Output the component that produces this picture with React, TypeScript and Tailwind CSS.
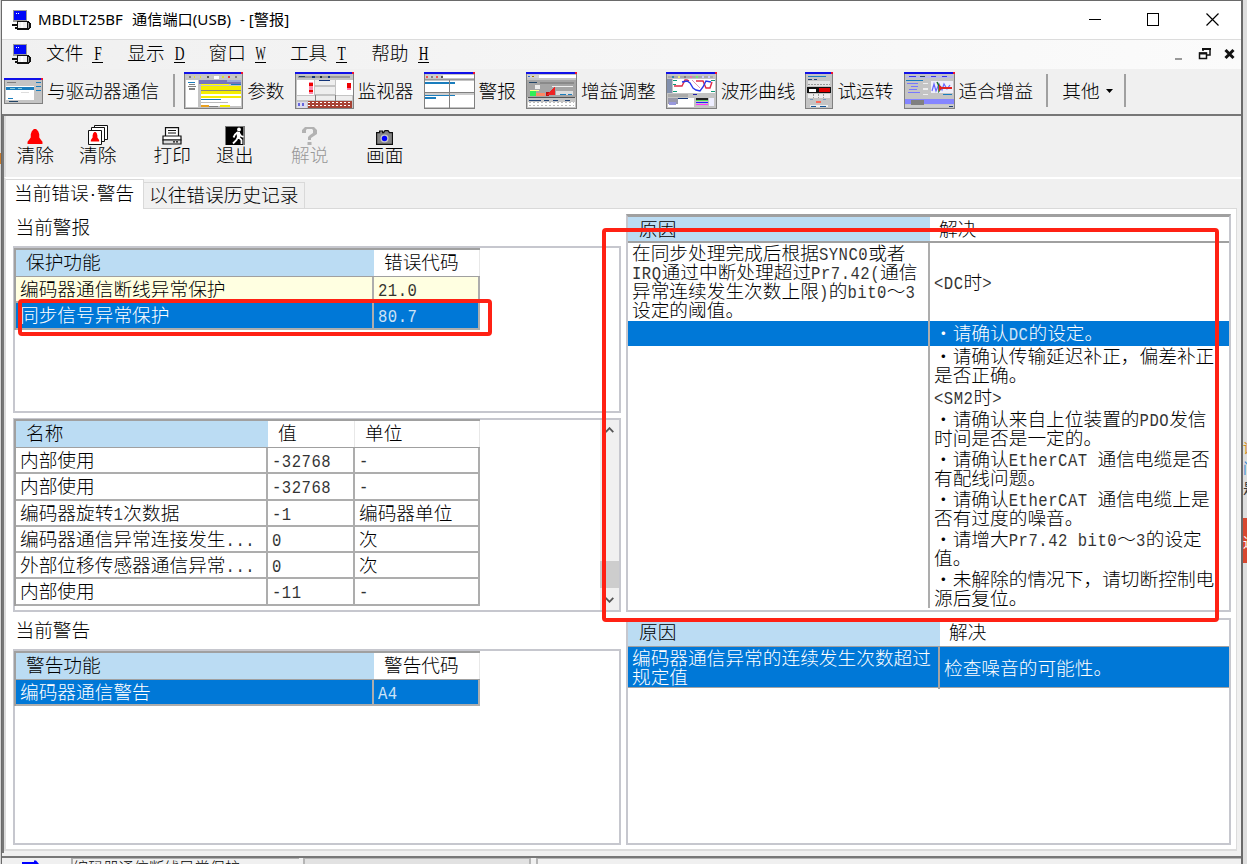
import React, { type ReactNode } from "react";

/* Half-width runs take roughly half of a CJK cell. */
function T({ s }: { s: string }) {
  return (
    <span className="whitespace-pre">
      {s.split(/([\x20-\x7e]+)/).map((p, i) =>
        i % 2 ? (
          <span key={i} className="inline-block origin-[50%_75%] scale-y-[1.15] font-['Liberation_Mono',monospace] text-[15.6px] leading-[16px] font-normal tracking-[0.5px] opacity-80">{p}</span>
        ) : (
          p
        ),
      )}
    </span>
  );
}

type Box = [number, number, number, number, string];
const G = "#808080";
const B = "#1a7dbd";

function Mini({ w, h = 37, boxes, children }: { w: number; h?: number; boxes: Box[]; children?: ReactNode }) {
  return (
    <svg width={w} height={h} viewBox={`0 0 ${w} ${h}`} shapeRendering="crispEdges" className="shrink-0">
      <rect width={w} height={h} fill={G} />
      <rect x="1" y="2" width={w - 2} height={h - 3} fill="#c4c4c4" />
      <rect width={w} height="2" fill="#1010e8" />
      <rect x={w - 2} width="2" height="2" fill="#f01030" />
      {boxes.map(([x, y, bw, bh, c], i) => (
        <rect key={i} x={x} y={y} width={bw} height={bh} fill={c} />
      ))}
      {children}
    </svg>
  );
}

const Connect = () => (
  <Mini w={39} h={26} boxes={[[3, 4, 9, 1, G], [32, 4, 5, 1, B], [2, 8, 28, 14, "#fff"], [2, 9, 28, 3, B], [6, 10, 5, 1, "#8cd"], [14, 10, 4, 1, "#8cd"], [32, 8, 5, 1, B], [32, 12, 5, 1, B], [4, 20, 5, 1, B], [5, 23, 9, 1, "#246"], [17, 14, 8, 1, "#ddd"]]} />
);
const Params = () => (
  <Mini w={59} boxes={[[2, 4, 55, 2, "#c8c8c8"], [5, 4, 2, 2, G], [10, 4, 1, 2, "#dd3"], [16, 4, 1, 2, "#dd3"], [23, 4, 2, 2, "#555"], [30, 4, 5, 3, "#fff"], [38, 4, 2, 2, "#dd3"], [44, 4, 2, 2, "#e33"], [51, 4, 2, 2, G], [2, 8, 12, 27, "#fff"], [4, 10, 7, 1, B], [5, 12, 6, 1, G], [4, 14, 8, 1, G], [5, 16, 6, 2, G], [15, 8, 42, 4, "#7676bd"], [43, 8, 14, 2, "#9ad"], [17, 14, 40, 20, "#fff"], [17, 12, 28, 1, "#ff0"], [47, 12, 10, 1, B], [17, 14, 40, 4, "#f5ee00"], [17, 18, 40, 1, "#887"], [17, 19, 40, 3, "#f5ee00"], [17, 24, 40, 2, "#f5ee00"], [17, 27, 20, 1, B], [17, 30, 27, 1, "#bbb"], [17, 33, 8, 2, "#e8a020"], [25, 34, 9, 1, G], [36, 33, 10, 2, "#f5ee00"]]} />
);
const Monitor = () => (
  <Mini w={59} boxes={[[3, 4, 52, 2, "#999"], [4, 4, 6, 1, "#246"], [17, 4, 3, 2, "#137"], [25, 4, 2, 2, "#233"], [33, 4, 2, 2, "#137"], [2, 8, 17, 15, "#fff"], [14, 10, 4, 12, "#ff8cae"], [14, 11, 4, 3, "#e00"], [14, 18, 4, 2, "#e00"], [20, 8, 20, 5, "#eee"], [20, 15, 20, 7, "#eee"], [24, 8, 11, 1, "#137"], [41, 8, 17, 15, "#fff"], [52, 11, 4, 5, "#e00"], [52, 16, 4, 2, "#f7a"], [2, 24, 55, 4, "#eee"], [20, 23, 1, 6, G], [40, 23, 1, 6, G], [2, 30, 10, 6, "#dde"], [3, 31, 2, 3, "#66d"], [7, 31, 2, 3, "#66d"], [13, 29, 44, 7, "#a74234"]]}>
    <path d="M13 30.500h44M13 33.500h44" stroke="#fff" strokeDasharray="2 2" />
  </Mini>
);
const Alarm = () => (
  <Mini w={51} boxes={[[1, 3, 18, 3, "#d0d0d0"], [19, 3, 31, 3, "#fff"], [2, 4, 2, 2, "#e55"], [7, 4, 2, 2, G], [12, 4, 2, 2, "#e55"], [17, 4, 2, 2, "#555"], [1, 9, 49, 26, "#fff"], [1, 7, 49, 1, "#999"], [1, 10, 30, 2, B], [1, 20, 49, 1, G], [1, 21, 49, 2, "#ccc"], [1, 23, 30, 1, B], [1, 25, 11, 2, B], [25, 8, 1, 28, G]]} />
);
const Gain = () => (
  <Mini w={51} boxes={[[1, 3, 49, 3, "#fff"], [1, 3, 12, 3, "#d0d0d0"], [2, 4, 2, 1, "#36c"], [6, 4, 2, 1, "#970"], [1, 8, 49, 17, "#a5a5a5"], [3, 10, 8, 1, "#246"], [9, 13, 5, 4, "#eee"], [14, 10, 34, 2, "#8a8a8a"], [26, 14, 21, 1, "#eee"], [4, 19, 6, 5, "#3e5"], [4, 18, 9, 1, "#ff8"], [10, 21, 9, 3, "#f86"], [20, 20, 3, 4, "#b11"], [30, 19, 17, 4, "#ddd"], [34, 22, 6, 1, B], [42, 22, 4, 1, B], [2, 25, 47, 1, "#555"], [3, 28, 12, 1, "#247"], [18, 28, 5, 1, "#247"], [27, 28, 5, 1, "#247"], [39, 28, 5, 1, "#247"], [2, 30, 47, 5, "#fff"]]}>
    <path d="M29 15v8H20z" fill="#e22" />
    <path d="M3 30.5h45M3 33.5h45" stroke="#bbb" strokeDasharray="2 2" />
  </Mini>
);
const Wave = () => (
  <Mini w={51} boxes={[[2, 4, 45, 2, "#aaa"], [6, 4, 2, 2, "#38a"], [12, 4, 2, 2, "#ee7"], [18, 4, 2, 2, G], [24, 4, 2, 2, "#e7a"], [30, 4, 2, 2, "#7e7"], [36, 4, 2, 2, "#ccf"], [42, 4, 2, 2, "#ccf"], [1, 7, 5, 14, "#8290ad"], [7, 7, 42, 14, "#fff"], [7, 8, 4, 1, "#197"], [7, 12, 3, 1, "#197"], [7, 19, 4, 1, "#197"], [45, 8, 4, 1, "#197"], [45, 19, 4, 1, "#197"], [2, 22, 20, 3, "#aaa"], [27, 22, 4, 1, "#22a"], [2, 26, 26, 9, "#fff"], [2, 26, 10, 6, "#99a"], [3, 30, 7, 3, "#99d"], [12, 26, 10, 1, "#137"], [30, 26, 12, 3, "#222"], [30, 30, 12, 1, "#22f"], [30, 28, 12, 1, "#5d5"], [30, 32, 12, 1, "#f3f"], [43, 26, 5, 8, "#eef"]]}>
    <path d="M8 14h8l3-6h2l2 1M30 9h7l3 7h4l2-6" fill="none" stroke="#e12b45" strokeWidth="1.4" shapeRendering="auto" />
    <path d="M16 10l5-1 3 2 3 5 3 2 4 1 3-4 3-6 5 1" fill="none" stroke="#2837e8" strokeWidth="1.4" shapeRendering="auto" />
    <path d="M26 8l8 8" stroke="#d9b" />
  </Mini>
);
const Trial = () => (
  <Mini w={28} boxes={[[3, 4, 18, 1, B], [3, 7, 4, 1, "#247"], [9, 7, 3, 1, "#247"], [3, 9, 22, 5, "#e5e5e5"], [2, 15, 11, 6, "#111"], [4, 17, 7, 3, "#fff"], [13, 15, 13, 6, "#111"], [14, 16, 11, 4, "#e00000"], [3, 22, 22, 4, "#eee"], [5, 27, 3, 1, "#79b"], [18, 27, 3, 1, "#79b"], [11, 29, 5, 2, "#f65"], [5, 33, 18, 2, "#eee"], [6, 34, 5, 1, "#159"], [15, 34, 6, 1, "#159"]]}>
    <path d="M8.500 22v4M13.500 22v4M18.500 22v4M3 12h22" stroke="#999" strokeDasharray="2 1" />
  </Mini>
);
const Fit = () => (
  <Mini w={51} boxes={[[2, 4, 47, 2, "#b8b8e8"], [5, 4, 7, 1, "#33e"], [16, 4, 5, 1, "#246"], [27, 4, 5, 1, "#33e"], [38, 4, 5, 1, "#33e"], [2, 8, 17, 1, B], [3, 11, 11, 1, "#77f"], [7, 14, 7, 1, "#77f"], [5, 17, 8, 1, "#77f"], [4, 20, 12, 1, "#77f"], [19, 11, 5, 1, "#eee"], [19, 16, 5, 2, "#eee"], [19, 22, 5, 1, "#eee"], [27, 9, 22, 12, "#eeeef8"], [1, 27, 49, 5, "#8585ff"], [7, 28, 13, 5, G], [1, 33, 49, 2, "#ccc"], [45, 34, 4, 1, "#247"], [39, 22, 9, 1, B]]}>
    <path d="M28 19l2-7 2 7 3-7 3 6 2-6 3 5 3-4" stroke="#66f" strokeWidth="1.200" fill="none" shapeRendering="auto" />
    <path d="M33 10l2 4v5l3-4" stroke="#176d24" strokeWidth="1.500" fill="none" shapeRendering="auto" />
    <path d="M35 15h13v2H35zM35 13l4 3-4 3z" fill="#e02020" />
  </Mini>
);

const AppIcon = () => (
  <svg width="20" height="20" viewBox="0 0 20 20" shapeRendering="crispEdges">
    <path d="M1 0h14v12H1z" fill="#999" />
    <path d="M2 1h12v9H2z" fill="#0008f8" />
    <path d="M4 3h1v1H4zM6 3h1v1H6z" fill="#fff" />
    <path d="M0 14h5v2H0zM3 17h3v2H3z" fill="#111" />
    <path d="M5 11h11l3 2v5l-3 2H5z" fill="#111" />
    <path d="M6 12h9v6H6z" fill="#f2f2f2" />
    <path d="M9 12h2v6H9z" fill="#fff" />
    <path d="M16 13h1v5h-1z" fill="#999" />
  </svg>
);

const BELL = "M7 0h2l2 2 1 3v3l1.500 2 1.500 2v2H1v-2l1.500-2L4 8V5l1-3z";
const Bell = () => (
  <svg width="18" height="16" viewBox="0 0 16 15"><path d={BELL} fill="#f00" /></svg>
);
const Bells = () => (
  <svg width="20" height="20" viewBox="0 0 20 20" fill="#fff" stroke="#111">
    <path d="M6.500.5h13v14h-13z" /><path d="M3.500 2.500h13v14h-13z" /><path d="M.5 5.500h13v14H.5z" />
    <path d={BELL} fill="#f00" stroke="none" transform="translate(2.200 7) scale(.6 .68)" />
  </svg>
);
const Printer = () => (
  <svg width="20" height="18" viewBox="0 0 20 18" fill="#fff" stroke="#111" strokeWidth="1.200">
    <path d="M3.500.7h13v9h-13z" /><path d="M6 3.500h8M6 6h8" /><path d="M1 9h18v4H1z" /><path d="M1 13h18v4H1z" fill="#ddd" /><path d="M11 14.800h5" strokeDasharray="2 1" />
  </svg>
);
const Exit = () => (
  <svg width="20" height="19" viewBox="0 0 20 19">
    <path d="M0 0h20v19H0z" fill="#777" /><path d="M1 1h17v18H1z" fill="#000" />
    <circle cx="14" cy="3.500" r="1.900" fill="#fff" />
    <path d="M13 6l-3 2.500-1.500 3M13 6l.5 5 3 3v4M13 11l-1.500 3L8 17.500M14 7l2 3 2.500.8" stroke="#fff" strokeWidth="1.800" fill="none" />
    <path d="M11.500 6h3.500v6h-3z" fill="#fff" />
  </svg>
);
const Help = () => (
  <svg width="17" height="18" viewBox="0 0 17 18" fill="#b2b2b2">
    <path d="M1 5V3l3-3h9l3 3v4l-3 2-3 2v2H7v-3l2-2 3-2V3l-1-1H6L5 3v3H1zM6.500 15h4v3h-4z" />
  </svg>
);
const Camera = () => (
  <svg width="17" height="15" viewBox="0 0 17 15">
    <path d="M.6 2.600h3V1h3v1.600h1L9 .6h3l1.500 2h3v11.800H.6z" fill="#858585" stroke="#111" strokeWidth="1.200" />
    <circle cx="8.500" cy="8.500" r="4" fill="#c8c8c8" /><circle cx="8.500" cy="8.500" r="2.700" fill="#00f" />
  </svg>
);

function ToolItem({ icon, label, pad = "mr-[10px]" }: { icon: ReactNode; label: string; pad?: string }) {
  return (
    <div className={`flex shrink-0 items-center gap-[4px] whitespace-nowrap ${pad}`}>
      {icon}
      <span className="pb-[2px]">{label}</span>
    </div>
  );
}

function Command({ icon, label, className = "" }: { icon: ReactNode; label: string; className?: string }) {
  return (
    <div className={`flex w-[62.5px] shrink-0 flex-col items-center ${className}`}>
      <div className="flex h-[20px] items-end">{icon}</div>
      <span className="leading-[17px]">{label}</span>
    </div>
  );
}

interface Row { cells: string[]; cls?: string }
function Grid({ cols, heads, rows }: { cols: string; heads: string[]; rows: Row[] }) {
  return (
    <div className="w-[466px] border-t-2 border-l-2 border-[#a0a0a0]">
      <div className={`grid h-[27px] border-b border-[#a0a0a0] ${cols}`}>
        {heads.map((h, i) => (
          <div key={h} className={`pl-[10px] leading-[21px] ${i === 0 ? "bg-[#bbdcf3]" : "border-r border-[#e8e8e8]"}`}>{h}</div>
        ))}
      </div>
      {rows.map((r, i) => (
        <div key={i} className={`grid h-[26.270px] border-b-2 border-[#adadad] ${cols} ${r.cls ?? ""}`}>
          {r.cells.map((c, j) => (
            <div key={j} className="border-r-2 border-[#adadad] pl-[4px] leading-[22px]"><T s={c} /></div>
          ))}
        </div>
      ))}
    </div>
  );
}

const box = "border-2 border-[#c6c7ce] bg-white";
const SOLUTIONS: { lines: string[]; cls: string }[] = [
  { lines: ["<DC时>"], cls: "h-[78px]" },
  { lines: ["・请确认DC的设定。"], cls: "h-[25px] bg-[#0078d7] text-white" },
  { lines: ["・请确认传输延迟补正，偏差补正", "是否正确。"], cls: "h-[40.500px]" },
  { lines: ["<SM2时>"], cls: "h-[22px]" },
  { lines: ["・请确认来自上位装置的PDO发信", "时间是否是一定的。"], cls: "h-[40.200px]" },
  { lines: ["・请确认EtherCAT 通信电缆是否", "有配线问题。"], cls: "h-[40.200px]" },
  { lines: ["・请确认EtherCAT 通信电缆上是", "否有过度的噪音。"], cls: "h-[40.200px]" },
  { lines: ["・请增大Pr7.42 bit0～3的设定", "值。"], cls: "h-[40.200px]" },
  { lines: ["・未解除的情况下，请切断控制电", "源后复位。"], cls: "h-[39px]" },
];
const REASON = ["在同步处理完成后根据SYNC0或者", "IRQ通过中断处理超过Pr7.42(通信", "异常连续发生次数上限)的bit0～3", "设定的阈值。"];

function Lines({ lines }: { lines: string[] }) {
  return (
    <div className="pb-[4px]">
      {lines.map((l) => <div key={l} className="h-[19px] leading-[19px]"><T s={l} /></div>)}
    </div>
  );
}

const MENUS = [["文件", "F"], ["显示", "D"], ["窗口", "W"], ["工具", "T"], ["帮助", "H"]];
const Sep = ({ cls }: { cls: string }) => <div className={`h-[33px] w-[2px] shrink-0 bg-[#a0a0a0] ${cls}`} />;

export default function App() {
  return (
    <div className="relative flex h-[864px] w-[1247px] overflow-hidden bg-[#dedede] font-['Noto_Sans_CJK_SC',sans-serif] text-[18.7px] font-light text-black">
      <div className="flex w-[1px] shrink-0 flex-col bg-[#d5d5d5]">
        <div className="mt-[153px] h-[11px] bg-[#ca7a28]" />
      </div>
      <div className="flex w-[1242px] shrink-0 flex-col border-t border-r-2 border-l border-[#6a6a6a] bg-[#f0f0f0]">
        {/* title bar */}
        <div className="flex h-[39px] shrink-0 items-center border-b border-[#dcdcdc] bg-white pb-[1px] pl-[10px]">
          <AppIcon />
          <div className="mb-[1px] ml-[6px] flex font-['Noto_Sans','Noto_Sans_CJK_SC',sans-serif] text-[15.2px] font-normal whitespace-pre">
            <span className="w-[94px] text-[15px]">MBDLT25BF</span>
            <span className="w-[108px]">通信端口(USB)</span>
            <span>- [警报]</span>
          </div>
          <svg width="130" height="14" viewBox="0 0 130 14" className="mr-[22px] ml-auto" fill="none" stroke="#000">
            <path d="M0 6.500h12M58.500.5h11v12h-11z" shapeRendering="crispEdges" />
            <path d="M117.500.5l12 12M129.500.5l-12 12" strokeWidth="1.200" />
          </svg>
        </div>
        {/* menu bar */}
        <div className="flex h-[29px] shrink-0 items-center bg-gradient-to-r from-[#f0f0f0] to-[#fbfbfb] pb-[2px] pl-[10px]">
          <AppIcon />
          <div className="ml-[14px] flex">
            {MENUS.map(([m, k]) => (
              <div key={k} className="flex w-[81.300px] items-center leading-[24px]">
                <span className="pb-[3px]">{m}</span>
                <span className="mt-[2px] ml-[9px] h-[16px] w-[11px] border-b border-black text-center font-['Liberation_Serif',serif] text-[18px] leading-[15px] font-normal"><span className={k === "W" ? "-mx-[4px] inline-block scale-x-[0.6]" : "-mx-[2px] inline-block scale-x-[0.75]"}>{k}</span></span>
              </div>
            ))}
          </div>
          <svg width="62" height="14" viewBox="0 0 62 14" className="mr-[5px] ml-auto" fill="none" stroke="#111" strokeWidth="2">
            <path d="M1 12h7" stroke="#999" />
            <path d="M29 4V2h7v6h-3M25.500 6h7v5.500h-7z" strokeWidth="1.500" /><path d="M25 6.500h8M28 2h9" />
            <path d="M51.500 3l8 8M59.500 3l-8 8" strokeWidth="3" />
          </svg>
        </div>
        {/* main toolbar */}
        <div className="flex h-[45px] shrink-0 items-center pb-[2px] pl-[2px] leading-[34px]">
          <ToolItem icon={<Connect />} label="与驱动器通信" pad="" />
          <Sep cls="mr-[9px] ml-[14px]" />
          <ToolItem icon={<Params />} label="参数" />
          <ToolItem icon={<Monitor />} label="监视器" />
          <ToolItem icon={<Alarm />} label="警报" />
          <ToolItem icon={<Gain />} label="增益调整" />
          <ToolItem icon={<Wave />} label="波形曲线" />
          <ToolItem icon={<Trial />} label="试运转" />
          <ToolItem icon={<Fit />} label="适合增益" pad="" />
          <Sep cls="ml-[13px]" />
          <span className="ml-[14px] shrink-0 pb-[2px] whitespace-nowrap">其他</span>
          <svg width="7" height="4" viewBox="0 0 7 4" className="ml-[6px]"><path d="M0 0h7L3.500 4z" /></svg>
          <Sep cls="ml-[11px]" />
        </div>

        {/* document window */}
        <div className="flex h-[739px] shrink-0 flex-col border-t-2 border-l-2 border-[#777]">
          <div className="flex h-[61px] shrink-0 border-l-2 border-[#dcdcdc] pt-[9px]">
            <Command icon={<Bell />} label="清除" className="-ml-[2px]" />
            <Command icon={<Bells />} label="清除" />
            <Command icon={<Printer />} label="打印" className="ml-[12px]" />
            <Command icon={<Exit />} label="退出" />
            <Command icon={<Help />} label="解说" className="ml-[12.500px] text-[#989898]" />
            <Command icon={<Camera />} label="画面" className="ml-[12.500px]" />
          </div>
          {/* tabs */}
          <div className="flex h-[32px] shrink-0 items-end border-t-2 border-l-2 border-t-white border-l-[#dcdcdc] whitespace-nowrap">
            <div className="h-[30px] w-[138px] border-t border-r border-[#d9d9d9] bg-white pl-[8px] leading-[24px]">
              当前错误<span className="inline-block w-[8px] text-center font-['Liberation_Sans',sans-serif] leading-none">·</span>警告
            </div>
            <div className="h-[27px] w-[161px] border-t border-r border-b border-[#d9d9d9] pl-[5px] leading-[22px]">以往错误历史记录</div>
            <div className="mr-[4px] h-[1px] flex-1 bg-[#d9d9d9]" />
          </div>
          {/* tab page */}
          <div className="mr-[4px] flex h-[642px] shrink-0 gap-[5px] border-r border-b-2 border-l-2 border-[#dcdcdc] bg-white pl-[7px]">
            <div className="flex w-[608px] shrink-0 flex-col">
              <div className="h-[37px] pl-[2.500px] leading-[33px]">当前警报</div>
              <div className={`h-[167px] ${box}`}>
                <div className="-ml-[1px]">
                  <Grid
                    cols="grid-cols-[358px_106px]"
                    heads={["保护功能", "错误代码"]}
                    rows={[
                      { cells: ["编码器通信断线异常保护", "21.0"], cls: "bg-[#ffffe1]" },
                      { cells: ["同步信号异常保护", "80.7"], cls: "bg-[#0078d7] text-white" },
                    ]}
                  />
                </div>
              </div>
              <div className={`mt-[5px] flex h-[194px] justify-between ${box}`}>
                <div className="-mt-[1px] -ml-[1px]">
                  <Grid
                    cols="grid-cols-[252px_87px_125px]"
                    heads={["名称", "值", "单位"]}
                    rows={[
                      { cells: ["内部使用", "-32768", "-"] },
                      { cells: ["内部使用", "-32768", "-"] },
                      { cells: ["编码器旋转1次数据", "-1", "编码器单位"] },
                      { cells: ["编码器通信异常连接发生...", "0", "次"] },
                      { cells: ["外部位移传感器通信异常...", "0", "次"] },
                      { cells: ["内部使用", "-11", "-"] },
                    ]}
                  />
                </div>
                <div className="flex w-[19px] flex-col items-center bg-[#f0f0f0] py-[7px]">
                  <svg width="9" height="6" viewBox="0 0 9 6" fill="none" stroke="#555" strokeWidth="1.800"><path d="M.7 5.200l3.800-4 3.800 4" /></svg>
                  <div className="mt-[128px] h-[27px] w-full bg-[#cdcdcd]" />
                  <svg width="9" height="6" viewBox="0 0 9 6" className="mt-auto" fill="none" stroke="#555" strokeWidth="1.800"><path d="M.7.8l3.800 4 3.800-4" /></svg>
                </div>
              </div>
              <div className="h-[37px] pl-[2.500px] leading-[33px]">当前警告</div>
              <div className={`h-[196px] ${box}`}>
                <div className="-ml-[1px]">
                  <Grid
                    cols="grid-cols-[358px_106px]"
                    heads={["警告功能", "警告代码"]}
                    rows={[{ cells: ["编码器通信警告", "A4"], cls: "bg-[#0078d7] text-white" }]}
                  />
                </div>
              </div>
            </div>

            <div className="flex w-[605px] shrink-0 flex-col pt-[5px]">
              <div className={`h-[398px] border-t-[3px] border-t-[#a0a0a0] ${box}`}>
                <div className="grid h-[26px] grid-cols-[302px_299px] border-b-2 border-[#a0a0a0]">
                  <div className="bg-[#bbdcf3] pl-[11px] leading-[22px]">原因</div>
                  <div className="pl-[9px] leading-[22px]">解决</div>
                </div>
                <div className="grid grid-cols-[302px_299px]">
                  <div className="border-r-2 border-[#adadad]">
                    <div className="flex h-[78px] items-center pl-[4px]"><Lines lines={REASON} /></div>
                    <div className="h-[25px] bg-[#0078d7]" />
                  </div>
                  <div>
                    {SOLUTIONS.map((s) => (
                      <div key={s.lines[0]} className={`flex items-center pl-[4px] ${s.cls}`}><Lines lines={s.lines} /></div>
                    ))}
                  </div>
                </div>
              </div>
              <div className={`mt-[6px] h-[227px] ${box}`}>
                <div className="grid h-[27px] grid-cols-[312px_289px] border-b border-[#a0a0a0]">
                  <div className="bg-[#bbdcf3] pl-[11px] leading-[22px]">原因</div>
                  <div className="pl-[9px] leading-[22px]">解决</div>
                </div>
                <div className="grid h-[41px] grid-cols-[312px_289px] border-b border-[#a3a3a3] bg-[#0078d7] text-white">
                  <div className="flex items-center border-r-2 border-[#a3a3a3] pl-[4px]"><Lines lines={["编码器通信异常的连续发生次数超过", "规定值"]} /></div>
                  <div className="flex items-center pl-[4px]"><Lines lines={["检查噪音的可能性。"]} /></div>
                </div>
              </div>
            </div>
          </div>
        </div>
        {/* status bar */}
        <div className="mt-[3px] flex h-[8px] shrink-0 overflow-hidden border-t-2 border-[#777]">
          <svg width="69" height="6" viewBox="0 0 69 6"><path d="M20 4h12V2.500h2L37 6H20z" fill="#00f" /></svg>
          <div className="h-[6px] w-[228px] overflow-hidden border-t border-l-2 border-[#b0b0b0] text-[15.200px] leading-[14px]">编码器通信断线异常保护</div>
          <div className="ml-[4px] w-[228px] border-t border-r-2 border-l-2 border-[#b5b5b5] bg-[#e2e2e2]" />
          <div className="ml-[5px] flex-1 border-t border-l-2 border-[#b5b5b5]" />
        </div>
      </div>

      {/* sliver of the page behind the window */}
      <div className="flex w-[4px] shrink-0 flex-col overflow-hidden pt-[437px] text-[14px] leading-[20px] font-normal">
        <span className="text-[#d58e20]">误</span>
        <span className="text-[#3c88d0]">问</span>
        <span className="text-[#333]">是</span>
        <div className="mt-[21px] flex h-[45px] shrink-0 items-center bg-[#d84830] text-white">通</div>
      </div>

      {/* hand-placed highlights over the tables */}
      <div className="absolute top-[299px] left-[18px] h-[37px] w-[474px] rounded-[4px] border-4 border-[#ff2114]" />
      <div className="absolute top-[228px] left-[602px] h-[394px] w-[617px] rounded-[4px] border-4 border-[#ff2114]" />
    </div>
  );
}
